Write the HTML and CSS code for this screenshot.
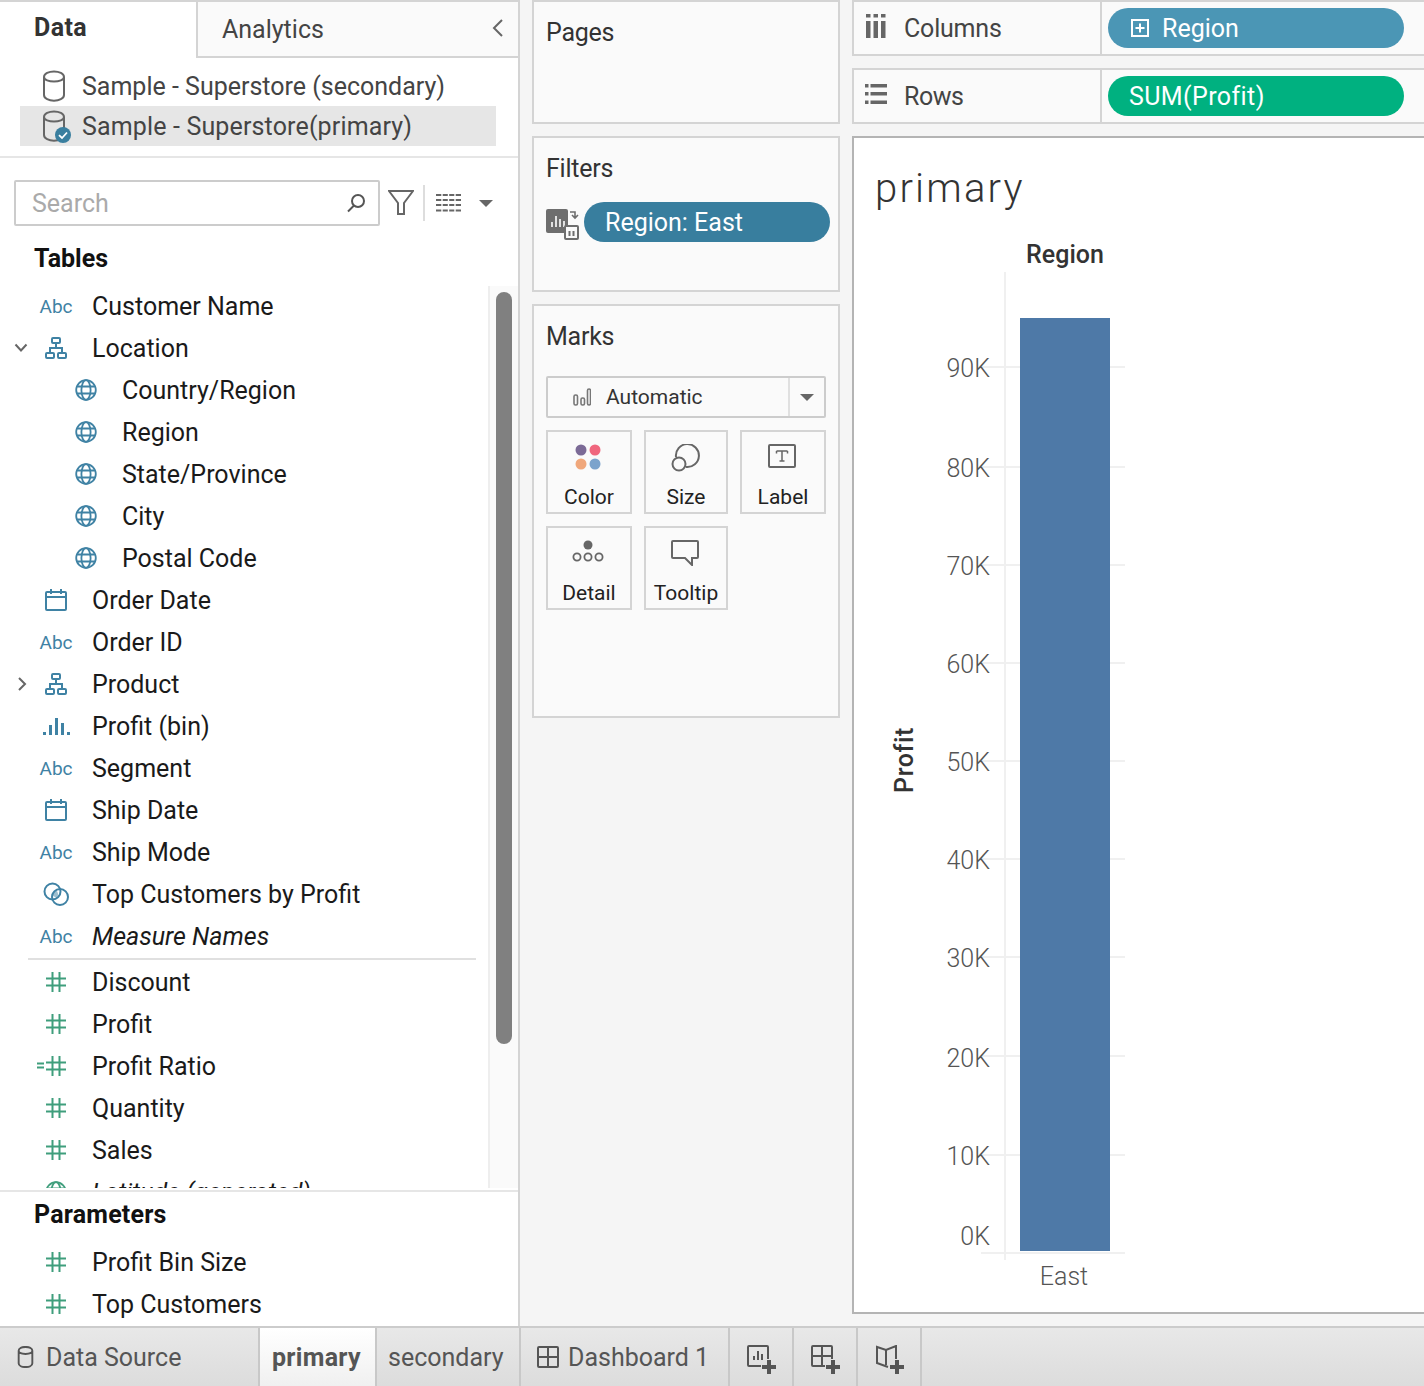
FILE: index.html
```html
<!DOCTYPE html>
<html lang="en">
<head>
<meta charset="utf-8">
<title>primary</title>
<link rel="stylesheet" href="styles.css">
</head>
<body>
<svg class="defs" width="0" height="0" aria-hidden="true">
  <symbol id="db" viewBox="0 0 24 32"><path d="M2 7C2 -0.5 22 -0.5 22 7V25C22 32.5 2 32.5 2 25Z M2 7C2 13 22 13 22 7" fill="none" stroke="currentColor" stroke-width="2" vector-effect="non-scaling-stroke"/></symbol>
  <symbol id="hier" viewBox="0 0 22 22"><g fill="none" stroke="currentColor" stroke-width="2"><rect x="7" y="1" width="8" height="5" rx="1"/><rect x="1" y="16" width="8" height="5" rx="1"/><rect x="13" y="16" width="8" height="5" rx="1"/><path d="M11 6V11M5 16V11H17V16"/></g></symbol>
  <symbol id="globe" viewBox="0 0 22 22"><g fill="none" stroke="currentColor" stroke-width="1.8"><circle cx="11" cy="11" r="9.8"/><ellipse cx="11" cy="11" rx="4.6" ry="9.8"/><path d="M2 7.5H20M2 14.5H20"/></g></symbol>
  <symbol id="cal" viewBox="0 0 22 22"><g fill="none" stroke="currentColor" stroke-width="2"><rect x="1" y="3" width="20" height="18" rx="1"/><path d="M1 8H21M6 0V5M16 0V5"/></g></symbol>
  <symbol id="hash" viewBox="0 0 22 22"><path d="M7.5 1V21M14.5 1V21M1 7.5H21M1 14.5H21" fill="none" stroke="currentColor" stroke-width="2"/></symbol>
  <symbol id="plus" viewBox="0 0 16 16"><path d="M8 1V15M1 8H15" fill="none" stroke="currentColor" stroke-width="4"/></symbol>
</svg>
<div class="app">
  <main class="main">
    <aside class="data-pane">
      <div class="pane-tabs">
        <div class="tab-data">Data</div>
        <div class="tab-analytics"><span>Analytics</span>
          <svg class="collapse" width="12" height="20" viewBox="0 0 12 20"><path d="M10 2L2 10L10 18" fill="none" stroke="#666" stroke-width="2"/></svg>
        </div>
      </div>
      <div class="sources">
        <div class="source"><svg class="source-icon" width="24" height="32"><use href="#db"/></svg><span>Sample - Superstore (secondary)</span></div>
        <div class="source source-active">
          <span class="source-icon-wrap"><svg class="source-icon" width="24" height="32"><use href="#db"/></svg>
          <svg class="check" width="16" height="16" viewBox="0 0 16 16"><circle cx="8" cy="8" r="8" fill="#3a7f9f"/><path d="M4 8.2L7 11L12 5.5" fill="none" stroke="#fff" stroke-width="1.8"/></svg></span>
          <span>Sample - Superstore(primary)</span>
        </div>
      </div>
      <div class="tools">
        <div class="search"><span>Search</span>
          <svg width="20" height="20" viewBox="0 0 20 20"><circle cx="12" cy="8" r="6" fill="none" stroke="#555" stroke-width="2"/><path d="M8 12.5L2 18.5" stroke="#555" stroke-width="2"/></svg>
        </div>
        <svg class="tool-filter" width="26" height="26" viewBox="0 0 26 26"><path d="M1 1H25L16 13V24L10 24V13Z" fill="none" stroke="#666" stroke-width="2"/></svg>
        <span class="tool-sep"></span>
        <svg class="tool-grid" width="25" height="19" viewBox="0 0 25 19"><path d="M0 1H25M0 6H25M0 11H25M0 16.5H25" stroke="#666" stroke-width="2"/><path d="M6 0V19M12.5 0V19M19 0V19" stroke="#fff" stroke-width="1.4"/></svg>
        <span class="caret tool-caret"></span>
      </div>
      <h2 class="section-title">Tables</h2>
      <div class="fields">
        <ul class="field-list">
          <li class="field"><span class="fi abc">Abc</span>Customer Name</li>
          <li class="field"><svg class="twist" width="14" height="10" viewBox="0 0 14 10"><path d="M1.5 1.5L7 7.5L12.5 1.5" fill="none" stroke="#666" stroke-width="2"/></svg><span class="fi"><svg class="blue" width="22" height="22"><use href="#hier"/></svg></span>Location</li>
          <li class="field sub"><span class="fi"><svg class="blue" width="22" height="22"><use href="#globe"/></svg></span>Country/Region</li>
          <li class="field sub"><span class="fi"><svg class="blue" width="22" height="22"><use href="#globe"/></svg></span>Region</li>
          <li class="field sub"><span class="fi"><svg class="blue" width="22" height="22"><use href="#globe"/></svg></span>State/Province</li>
          <li class="field sub"><span class="fi"><svg class="blue" width="22" height="22"><use href="#globe"/></svg></span>City</li>
          <li class="field sub"><span class="fi"><svg class="blue" width="22" height="22"><use href="#globe"/></svg></span>Postal Code</li>
          <li class="field"><span class="fi"><svg class="blue" width="22" height="22"><use href="#cal"/></svg></span>Order Date</li>
          <li class="field"><span class="fi abc">Abc</span>Order ID</li>
          <li class="field"><svg class="twist twist-right" width="10" height="16" viewBox="0 0 10 16"><path d="M2 2L8 8L2 14" fill="none" stroke="#666" stroke-width="2"/></svg><span class="fi"><svg class="blue" width="22" height="22"><use href="#hier"/></svg></span>Product</li>
          <li class="field"><span class="fi"><svg class="blue" width="28" height="20" viewBox="0 0 28 20"><path d="M1 16h3v3H1zM7 9h3v10H7zM13 2h3v17h-3zM19 7h3v12h-3zM25 16h3v3h-3z" fill="currentColor"/></svg></span>Profit (bin)</li>
          <li class="field"><span class="fi abc">Abc</span>Segment</li>
          <li class="field"><span class="fi"><svg class="blue" width="22" height="22"><use href="#cal"/></svg></span>Ship Date</li>
          <li class="field"><span class="fi abc">Abc</span>Ship Mode</li>
          <li class="field"><span class="fi"><svg class="blue" width="26" height="24" viewBox="0 0 26 24"><path d="M14 9a7 7 0 0 1 0 7a7 7 0 0 1-5-5a7 7 0 0 1 5-2z" fill="#9dbfcf"/><g fill="none" stroke="currentColor" stroke-width="2"><circle cx="9.500" cy="9.500" r="8"/><circle cx="17" cy="15" r="8"/></g></svg></span>Top Customers by Profit</li>
          <li class="field em"><span class="fi abc">Abc</span>Measure Names</li>
          <li class="field-rule"></li>
          <li class="field"><span class="fi"><svg class="green" width="22" height="22"><use href="#hash"/></svg></span>Discount</li>
          <li class="field"><span class="fi"><svg class="green" width="22" height="22"><use href="#hash"/></svg></span>Profit</li>
          <li class="field"><span class="fi fi-calc"><svg class="green" width="8" height="8" viewBox="0 0 8 8"><path d="M0 1.500H7M0 5.500H7" stroke="currentColor" stroke-width="2"/></svg><svg class="green" width="22" height="22"><use href="#hash"/></svg></span>Profit Ratio</li>
          <li class="field"><span class="fi"><svg class="green" width="22" height="22"><use href="#hash"/></svg></span>Quantity</li>
          <li class="field"><span class="fi"><svg class="green" width="22" height="22"><use href="#hash"/></svg></span>Sales</li>
          <li class="field em"><span class="fi"><svg class="green" width="22" height="22"><use href="#globe"/></svg></span>Latitude (generated)</li>
        </ul>
        <div class="scroll-track"></div>
        <div class="scroll-thumb"></div>
      </div>
      <div class="params">
        <h2 class="section-title params-title">Parameters</h2>
        <ul class="field-list">
          <li class="field"><span class="fi"><svg class="green" width="22" height="22"><use href="#hash"/></svg></span>Profit Bin Size</li>
          <li class="field"><span class="fi"><svg class="green" width="22" height="22"><use href="#hash"/></svg></span>Top Customers</li>
        </ul>
      </div>
    </aside>

    <section class="cards">
      <div class="card card-pages"><h3 class="card-title">Pages</h3></div>
      <div class="card card-filters"><h3 class="card-title">Filters</h3>
        <div class="filter-row">
          <svg width="33" height="31" viewBox="0 0 33 31"><rect x="0" y="0" width="22" height="24" rx="2" fill="#6e6e6e"/><path d="M6 13v5M10 7v11M14 10v8M18 12v6" stroke="#fff" stroke-width="1.6"/><path d="M24 3h5v5M26 6l3 3 3-3" fill="none" stroke="#6e6e6e" stroke-width="1.6"/><rect x="19" y="17" width="13" height="13" rx="1" fill="#fafafa" stroke="#6e6e6e" stroke-width="2"/><path d="M23.500 22v5M27.500 22v5" stroke="#6e6e6e" stroke-width="2"/></svg>
          <div class="pill pill-filter">Region: East</div>
        </div>
      </div>
      <div class="card card-marks"><h3 class="card-title">Marks</h3>
        <div class="mark-select">
          <div class="mark-type"><svg width="18" height="18" viewBox="0 0 18 18"><g fill="none" stroke="#777" stroke-width="1.600"><rect x="1" y="7" width="3.500" height="10" rx="1.500"/><rect x="8" y="10" width="3.500" height="7" rx="1.500"/><rect x="14.500" y="1" width="3" height="16" rx="1.500"/></g></svg><span>Automatic</span></div>
          <div class="mark-arrow"><span class="caret"></span></div>
        </div>
        <div class="mark-grid">
          <div class="mark-btn"><svg width="26" height="26" viewBox="0 0 26 26"><circle cx="6" cy="6" r="5.500" fill="#7b6a96"/><circle cx="20" cy="6" r="5.500" fill="#f0677e"/><circle cx="6" cy="20" r="5.500" fill="#f0a77b"/><circle cx="20" cy="20" r="5.500" fill="#7ba3cc"/></svg><span>Color</span></div>
          <div class="mark-btn"><svg width="29" height="28" viewBox="0 0 29 28"><g fill="none" stroke="#666" stroke-width="2"><path d="M5 13A11.500 11.500 0 1 1 15 23"/><circle cx="8" cy="20" r="6.500"/></g></svg><span>Size</span></div>
          <div class="mark-btn"><svg width="28" height="24" viewBox="0 0 28 24"><rect x="1" y="1" width="26" height="22" rx="1" fill="none" stroke="#666" stroke-width="2"/><path d="M8.500 7H19.500M14 7V17M11.500 17H16.500M8.500 7V9.500M19.500 7V9.500" fill="none" stroke="#666" stroke-width="1.500"/></svg><span>Label</span></div>
          <div class="mark-btn"><svg width="32" height="22" viewBox="0 0 32 22"><circle cx="16" cy="5" r="4.500" fill="#666"/><g fill="none" stroke="#666" stroke-width="1.800"><circle cx="5" cy="17" r="3.600"/><circle cx="16" cy="17" r="3.600"/><circle cx="27" cy="17" r="3.600"/></g></svg><span>Detail</span></div>
          <div class="mark-btn"><svg width="28" height="26" viewBox="0 0 28 26"><path d="M2 1H26A1 1 0 0 1 27 2V17A1 1 0 0 1 26 18H21V25L14 18H2A1 1 0 0 1 1 17V2A1 1 0 0 1 2 1Z" fill="none" stroke="#666" stroke-width="2"/></svg><span>Tooltip</span></div>
        </div>
      </div>
    </section>

    <section class="work">
      <div class="shelf shelf-cols">
        <div class="shelf-label"><svg width="20" height="24" viewBox="0 0 20 24"><path d="M0 0h4.500v3.500H0zM7.500 0h4.500v3.500H7.500zM15 0h4.500v3.500H15zM0 7h4.500v17H0zM7.500 7h4.500v17H7.500zM15 7h4.500v17H15z" fill="#666"/></svg><span>Columns</span></div>
        <div class="shelf-body"><div class="pill pill-dim"><svg width="18" height="18" viewBox="0 0 18 18"><rect x="1" y="1" width="16" height="16" fill="none" stroke="#fff" stroke-width="2"/><path d="M9 4.500V13.500M4.500 9H13.500" stroke="#fff" stroke-width="2"/></svg>Region</div></div>
      </div>
      <div class="shelf shelf-rows">
        <div class="shelf-label"><svg width="22" height="20" viewBox="0 0 22 20"><path d="M0 0h3.500v3.500H0zM0 8h3.500v3.500H0zM0 16.500h3.500v3.500H0zM5.500 0H22v3.500H5.500zM5.500 8H22v3.500H5.500zM5.500 16.500H22v3.500H5.500z" fill="#666"/></svg><span>Rows</span></div>
        <div class="shelf-body"><div class="pill pill-meas">SUM(Profit)</div></div>
      </div>
      <div class="view">
        <h1 class="view-title">primary</h1>
        <svg class="chart" width="570" height="1082" viewBox="854 230 570 1082">
          <path class="grid" d="M1005 272V1260"/>
          <path class="grid" d="M981 367H1125M981 467H1125M981 565H1125M981 663H1125M981 761H1125M981 859H1125M981 957H1125M981 1056H1125M981 1155H1125M981 1253H1125"/>
          <rect x="1020" y="318" width="90" height="933" fill="#4e79a7"/>
          <text class="hdr" x="1065" y="263" text-anchor="middle">Region</text>
          <text class="hdr hdr-v" transform="translate(913 760) rotate(-90)" text-anchor="middle">Profit</text>
          <g class="ticks" text-anchor="end">
            <text x="990" y="377">90K</text><text x="990" y="477">80K</text><text x="990" y="575">70K</text><text x="990" y="673">60K</text><text x="990" y="771">50K</text><text x="990" y="869">40K</text><text x="990" y="967">30K</text><text x="990" y="1067">20K</text><text x="990" y="1165">10K</text><text x="990" y="1245">0K</text>
          </g>
          <text class="ticks" x="1064" y="1285" text-anchor="middle">East</text>
        </svg>
      </div>
    </section>
  </main>

  <footer class="tabbar">
    <div class="sheet sheet-source"><svg width="17" height="22" viewBox="0 0 24 32"><use href="#db"/></svg><span>Data Source</span></div>
    <div class="sheet sheet-active">primary</div>
    <div class="sheet sheet-second">secondary</div>
    <div class="sheet sheet-dash"><svg width="22" height="22" viewBox="0 0 22 22"><path d="M2 1H20A1 1 0 0 1 21 2V20A1 1 0 0 1 20 21H2A1 1 0 0 1 1 20V2A1 1 0 0 1 2 1ZM11 1V21M1 11H21" fill="none" stroke="currentColor" stroke-width="2"/></svg><span>Dashboard 1</span></div>
    <div class="sheet sheet-add"><svg width="30" height="30" viewBox="0 0 30 30"><path d="M14 21H2A1 1 0 0 1 1 20V2A1 1 0 0 1 2 1H20A1 1 0 0 1 21 2V14M7 15V11M11 15V6M15 15V9" fill="none" stroke="currentColor" stroke-width="2"/><use href="#plus" x="14" y="14" width="16" height="16"/></svg></div>
    <div class="sheet sheet-add"><svg width="30" height="30" viewBox="0 0 30 30"><path d="M14 21H2A1 1 0 0 1 1 20V2A1 1 0 0 1 2 1H20A1 1 0 0 1 21 2V14M11 1V21M1 11H21" fill="none" stroke="currentColor" stroke-width="2"/><use href="#plus" x="14" y="14" width="16" height="16"/></svg></div>
    <div class="sheet sheet-add"><svg width="30" height="30" viewBox="0 0 30 30"><path d="M13 22L2 18V2L11 5L21 1V14M11 5V20" fill="none" stroke="currentColor" stroke-width="2"/><use href="#plus" x="14" y="14" width="16" height="16"/></svg></div>
  </footer>
</div>
</body>
</html>
```

FILE: styles.css
```css
* { box-sizing: border-box; }
html, body { margin: 0; padding: 0; height: 100%; overflow: hidden; }
body { font-family: Roboto, "Liberation Sans", sans-serif; font-size: 25px; color: #1f1f1f; background: #f5f5f5; }
h1, h2, h3, ul { margin: 0; padding: 0; font-weight: 400; }
ul { list-style: none; }
.defs { position: absolute; }

.app { display: flex; flex-direction: column; width: 1424px; height: 1386px; }
.main { display: flex; height: 1326px; }

/* data pane */
.data-pane { width: 520px; flex: none; background: #fff; border-right: 2px solid #d4d4d4; border-top: 2px solid #d4d4d4; display: flex; flex-direction: column; }
.pane-tabs { display: flex; height: 56px; flex: none; }
.tab-data { width: 196px; padding: 11px 0 0 34px; font-weight: 700; font-size: 25px; letter-spacing: 0.4px; color: #333; }
.tab-analytics { flex: 1; display: flex; justify-content: space-between; align-items: center; padding: 0 14px 0 24px; background: #fafafa; border-left: 2px solid #d4d4d4; border-bottom: 2px solid #d4d4d4; color: #444; }
.collapse { margin-top: -3px; }
.sources { padding: 8px 22px 0 20px; height: 100px; flex: none; border-bottom: 2px solid #e6e6e6; }
.source { display: flex; align-items: center; height: 40px; padding-left: 22px; gap: 16px; color: #444; }
.source-active { background: #e6e6e6; letter-spacing: 0.15px; }
.source-icon { color: #666; display: block; }
.source-icon-wrap { position: relative; display: block; }
.check { position: absolute; left: 13px; top: 17px; }

.tools { display: flex; align-items: center; padding: 22px 0 0 14px; height: 68px; flex: none; }
.search { width: 366px; height: 46px; border: 2px solid #ccc; border-radius: 2px; display: flex; align-items: center; justify-content: space-between; padding: 0 12px 0 16px; color: #aaa; }
.tool-filter { margin-left: 8px; }
.tool-sep { width: 2px; height: 36px; background: #ddd; margin-left: 9px; }
.tool-grid { margin-left: 11px; }
.tool-caret { margin-left: 18px; }
.caret { display: block; width: 0; height: 0; border-left: 7px solid transparent; border-right: 7px solid transparent; border-top: 7px solid #666; }

.section-title { font-weight: 700; font-size: 25px; color: #111; padding-left: 34px; height: 60px; line-height: 30px; padding-top: 18px; flex: none; }
.fields { position: relative; height: 902px; overflow: hidden; flex: none; }
.fields .field-list { margin-top: -1px; }
.field-list { display: flex; flex-direction: column; }
.field { display: flex; align-items: center; height: 42px; flex: none; padding-left: 36px; position: relative; color: #1a1a1a; white-space: nowrap; }
.field.sub { padding-left: 66px; }
.field.em { font-style: italic; }
.fi { width: 40px; height: 42px; margin-right: 16px; flex: none; display: flex; align-items: center; justify-content: center; font-style: normal; }
.fi-calc { position: relative; }
.fi-calc svg:first-child { position: absolute; left: 1px; top: 17px; }
.abc { font-size: 19px; color: #3f82a4; }
.blue { color: #3f82a4; }
.green { color: #3f9e7c; }
.twist { position: absolute; left: 14px; top: 16px; }
.twist-right { left: 17px; top: 13px; }
.field-rule { height: 2px; flex: none; background: #e0e0e0; margin: 1px 42px 1px 28px; }
.scroll-track { position: absolute; top: 0; right: 0; bottom: 0; width: 30px; background: #fafafa; border-left: 2px solid #eee; }
.scroll-thumb { position: absolute; top: 6px; left: 496px; width: 16px; height: 752px; background: #808080; border-radius: 8px; }
.params { border-top: 2px solid #e6e6e6; flex: 1; margin-top: 2px; }
.params-title { height: 49px; padding-top: 8px; letter-spacing: 0.2px; }

/* cards */
.cards { width: 332px; flex: none; padding: 0 12px; display: flex; flex-direction: column; gap: 12px; background: #f5f5f5; }
.card { background: #fafafa; border: 2px solid #d4d4d4; padding: 0 12px; }
.card-pages { height: 124px; }
.card-filters { height: 156px; }
.card-marks { height: 414px; }
.card-title { font-size: 25px; letter-spacing: -0.25px; color: #333; line-height: 30px; padding-top: 16px; }
.filter-row { display: flex; align-items: center; gap: 5px; margin: 18px -4px 0 0; }
.filter-row svg { flex: none; margin-top: 4px; }
.pill { height: 40px; border-radius: 20px; color: #fff; display: flex; align-items: center; }
.pill-filter { background: #387e9e; width: 246px; flex: none; padding-left: 21px; }
.mark-select { margin-top: 24px; width: 280px; height: 42px; border: 2px solid #ccc; border-radius: 2px; display: flex; }
.mark-type { flex: 1; display: flex; align-items: center; gap: 15px; padding-left: 25px; font-size: 21px; color: #333; border-right: 2px solid #e0e0e0; }
.mark-arrow { width: 34px; display: flex; align-items: center; justify-content: center; }
.mark-grid { display: grid; grid-template-columns: 86px 84px 86px; grid-auto-rows: 84px; gap: 12px; margin-top: 12px; }
.mark-btn { border: 2px solid #d4d4d4; display: flex; flex-direction: column; align-items: center; font-size: 21px; color: #222; padding-top: 12px; justify-content: space-between; padding-bottom: 3px; }
.mark-btn svg { margin-right: 2px; }

/* work area */
.work { flex: 1; min-width: 0; display: flex; flex-direction: column; }
.shelf { display: flex; background: #fafafa; border: 2px solid #d4d4d4; border-right: 0; height: 56px; flex: none; }
.shelf-rows { margin-top: 12px; }
.shelf-label { width: 248px; border-right: 2px solid #d4d4d4; display: flex; align-items: center; gap: 18px; padding-left: 12px; color: #444; letter-spacing: -0.2px; }
.shelf-label svg { margin-top: -4px; }
.shelf-rows .shelf-label { padding-left: 11px; gap: 17px; letter-spacing: -0.5px; }
.shelf-body { padding: 6px 0 0 6px; }
.pill-dim { width: 296px; background: #4b96b5; padding-left: 23px; gap: 13px; }
.pill-dim svg { margin-top: 0; }
.pill-meas { width: 296px; background: #00b180; padding-left: 21px; letter-spacing: 0.4px; }
.view { margin-top: 12px; height: 1178px; background: #fff; border: 2px solid #b4b4b4; border-right: 0; overflow: hidden; }
.view-title { font-size: 40px; letter-spacing: 2.2px; color: #333; font-weight: 300; padding: 27px 0 0 21px; height: 92px; line-height: 48px; }
.chart { display: block; }
.grid { fill: none; stroke: #f0f0f0; stroke-width: 2; }
.hdr { font-family: Roboto, "Liberation Sans", sans-serif; font-size: 25px; font-weight: 500; fill: #333; }
.hdr-v { letter-spacing: 0.6px; }
.ticks { font-family: Roboto, "Liberation Sans", sans-serif; font-size: 25px; font-weight: 300; fill: #555; }

/* tabs */
.tabbar { display: flex; height: 60px; flex: none; background: linear-gradient(#e8e8e8, #dcdcdc); border-top: 2px solid #ccc; color: #555; }
.sheet { display: flex; align-items: center; border-right: 2px solid #c8c8c8; }
.sheet-source { width: 260px; padding-left: 17px; gap: 12px; }
.sheet-active { width: 117px; padding-left: 12px; font-weight: 700; letter-spacing: 0.3px; background: linear-gradient(#fff, #f0f0f0); }
.sheet-second { width: 144px; padding-left: 11px; }
.sheet-dash { width: 209px; padding-left: 16px; gap: 9px; }
.sheet-add { width: 64px; justify-content: center; padding: 5px 0 0 2px; }
```
